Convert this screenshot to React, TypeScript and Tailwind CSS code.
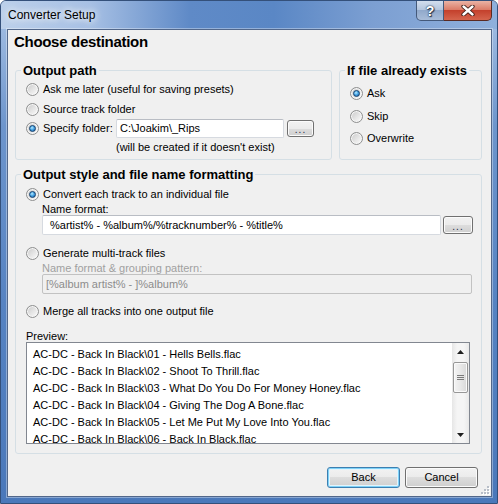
import React from "react";

const Radio = ({ checked = false }: { checked?: boolean }) => (
  <span className="flex h-[13px] w-[13px] shrink-0 items-center justify-center rounded-full border border-[#8e8f8f] bg-[linear-gradient(135deg,#c9c9c9_0%,#e6e6e6_55%,#fdfdfd_100%)] shadow-[inset_0_0_0_1px_#f7f7f7]">
    {checked && (
      <span className="h-[7px] w-[7px] rounded-full border border-[#12406f] bg-[radial-gradient(circle_at_40%_35%,#b9ecff_0%,#49a6e6_45%,#175a9e_100%)]" />
    )}
  </span>
);

const RadioRow = ({
  checked,
  label,
  className = "",
}: {
  checked?: boolean;
  label: string;
  className?: string;
}) => (
  <div className={`flex items-center gap-[4px] ${className}`}>
    <Radio checked={checked} />
    <span className="whitespace-nowrap text-[11px] leading-[13px] text-black">{label}</span>
  </div>
);

const DotsButton = ({ className = "" }: { className?: string }) => (
  <div
    className={`flex shrink-0 items-center justify-center rounded-[3px] border border-[#707070] bg-[linear-gradient(180deg,#f2f2f2_0%,#ebebeb_50%,#dddddd_50%,#cfcfcf_100%)] shadow-[inset_0_0_0_1px_#fbfbfb] ${className}`}
  >
    <span className="pt-[3px] text-[10px] leading-[10px] tracking-[1px] text-[#1c2a44]">...</span>
  </div>
);

const PushButton = ({ label, isDefault = false }: { label: string; isDefault?: boolean }) => (
  <div
    className={`flex h-[21px] w-[73px] items-center justify-center rounded-[3px] border bg-[linear-gradient(180deg,#f2f2f2_0%,#ebebeb_50%,#dddddd_50%,#cfcfcf_100%)] ${
      isDefault
        ? "border-[#3c7fb1] shadow-[inset_0_0_0_1px_#7fd2f8,inset_0_0_0_2px_#e3f4fc]"
        : "border-[#707070] shadow-[inset_0_0_0_1px_#fbfbfb]"
    }`}
  >
    <span className="text-[11px] leading-[13px] text-black">{label}</span>
  </div>
);

const files = [
  "AC-DC - Back In Black\\01 - Hells Bells.flac",
  "AC-DC - Back In Black\\02 - Shoot To Thrill.flac",
  "AC-DC - Back In Black\\03 - What Do You Do For Money Honey.flac",
  "AC-DC - Back In Black\\04 - Giving The Dog A Bone.flac",
  "AC-DC - Back In Black\\05 - Let Me Put My Love Into You.flac",
  "AC-DC - Back In Black\\06 - Back In Black.flac",
];

export default function App() {
  return (
    <div className="flex h-[504px] w-[498px] flex-col overflow-hidden rounded-t-[6px] border border-[#34507a] bg-[linear-gradient(180deg,#a9c3e6_0%,#6d95cc_25%,#5683c2_60%,#4a78ba_100%)] font-['Liberation_Sans',Arial,sans-serif]">
      {/* Title bar */}
      <div className="flex h-[28px] shrink-0 items-start bg-[linear-gradient(90deg,#bcd0ea_0%,#a7c0e4_18%,#5f8ac7_38%,#5a87c5_55%,#7c9fd2_75%,#8fb0dc_100%)]">
        <span className="ml-[7px] mt-[7px] text-[12px] leading-[15px] text-black [text-shadow:0_0_6px_#ffffff,0_0_10px_#ffffff]">
          Converter Setup
        </span>
        <div className="ml-auto mr-[5px] flex">
          <div className="flex h-[20px] w-[28px] items-center justify-center rounded-bl-[5px] border border-t-0 border-[#44597a] bg-[linear-gradient(180deg,#d3deee_0%,#b5c6de_45%,#91a9cb_50%,#a9bdd9_100%)]">
            <span className="text-[14px] font-bold leading-[14px] text-white [text-shadow:0_0_1px_#24354f,0_0_2px_#24354f,1px_1px_1px_#24354f]">
              ?
            </span>
          </div>
          <div className="flex h-[20px] w-[48px] items-center justify-center rounded-br-[5px] border border-l-0 border-t-0 border-[#5b2a22] bg-[linear-gradient(180deg,#eab3a5_0%,#dc7d69_45%,#c4412d_50%,#d5654e_100%)]">
            <svg width="14" height="11" viewBox="0 0 14 11">
              <path d="M2.5 1.5 L11.5 9.5 M11.5 1.5 L2.5 9.5" stroke="#3b1a14" strokeWidth="4.2" strokeLinecap="round" />
              <path d="M2.5 1.5 L11.5 9.5 M11.5 1.5 L2.5 9.5" stroke="#ffffff" strokeWidth="2.4" strokeLinecap="round" />
            </svg>
          </div>
        </div>
      </div>

      {/* Client area */}
      <div className="relative ml-[6px] flex h-[468px] w-[485px] flex-col border border-[#52678a] bg-[#f0f0f0] shadow-[0_0_0_1px_rgba(255,255,255,0.35)]">
        <div className="ml-[6px] mt-[3px] h-[18px] text-[15px] font-bold leading-[18px] tracking-[-0.3px] text-black">
          Choose destination
        </div>

        {/* Top row */}
        <div className="ml-[7px] mt-[12px] flex gap-[7px]">
          <fieldset className="h-[97px] w-[317px] rounded-[3px] border border-[#d5dfe5]">
            <legend className="ml-[5px] px-[2px] text-[13px] font-bold leading-[15px] text-black">Output path</legend>
            <div className="flex flex-col pl-[10px]">
              <RadioRow label="Ask me later (useful for saving presets)" className="mt-[1px] h-[20px]" />
              <RadioRow label="Source track folder" className="h-[20px]" />
              <div className="flex h-[19px] items-center">
                <div className="w-[90px]">
                  <RadioRow checked label="Specify folder:" />
                </div>
                <div className="flex h-[19px] w-[168px] items-center rounded-[2px] border border-[#d6dae0] border-t-[#b9bdc4] bg-white pl-[3px]">
                  <span className="text-[11px] leading-[13px] text-black">C:\Joakim\_Rips</span>
                </div>
                <DotsButton className="ml-[3px] h-[17px] w-[27px]" />
              </div>
              <div className="ml-[90px] flex h-[18px] items-center">
                <span className="text-[11px] leading-[13px] text-black">(will be created if it doesn't exist)</span>
              </div>
            </div>
          </fieldset>

          <fieldset className="h-[97px] w-[143px] rounded-[3px] border border-[#d5dfe5]">
            <legend className="ml-[5px] px-[2px] text-[13px] font-bold leading-[15px] text-black">If file already exists</legend>
            <div className="mt-[4px] flex flex-col pl-[10px]">
              <RadioRow checked label="Ask" className="h-[23px]" />
              <RadioRow label="Skip" className="h-[22px]" />
              <RadioRow label="Overwrite" className="h-[22px]" />
            </div>
          </fieldset>
        </div>

        {/* Output style group */}
        <fieldset className="ml-[7px] mt-[7px] h-[287px] w-[467px] rounded-[3px] border border-[#d5dfe5]">
          <legend className="ml-[5px] px-[2px] text-[13px] font-bold leading-[15px] text-black">
            Output style and file name formatting
          </legend>
          <div className="flex flex-col pl-[10px]">
            <RadioRow checked label="Convert each track to an individual file" className="mt-[2px] h-[20px]" />
            <div className="ml-[16px] flex h-[11px] items-center">
              <span className="text-[11px] leading-[13px] text-black">Name format:</span>
            </div>
            <div className="ml-[16px] flex h-[20px] items-center">
              <div className="flex h-[20px] w-[399px] items-center rounded-[2px] border border-[#d6dae0] border-t-[#b9bdc4] bg-white pl-[7px]">
                <span className="whitespace-nowrap text-[11px] leading-[13px] text-black">
                  %artist% - %album%/%tracknumber% - %title%
                </span>
              </div>
              <DotsButton className="ml-[2px] h-[18px] w-[30px]" />
            </div>
            <RadioRow label="Generate multi-track files" className="mt-[8px] h-[20px]" />
            <div className="ml-[16px] flex h-[11px] items-center">
              <span className="text-[11px] leading-[13px] text-[#a0a0a0]">Name format &amp; grouping pattern:</span>
            </div>
            <div className="ml-[16px] flex h-[20px] w-[430px] items-center rounded-[2px] border border-[#c2c2c2] bg-[#f0f0f0] pl-[3px]">
              <span className="text-[11px] leading-[13px] text-[#8c8c8c]">[%album artist% - ]%album%</span>
            </div>
            <RadioRow label="Merge all tracks into one output file" className="mt-[7px] h-[20px]" />
            <div className="mt-[9px] flex h-[12px] items-center">
              <span className="text-[11px] leading-[13px] text-black">Preview:</span>
            </div>
            <div className="flex h-[102px] w-[444px] border border-[#828790] bg-white">
              <div className="flex-1 overflow-hidden pl-[6px] pt-[3px]">
                {files.map((f) => (
                  <div key={f} className="h-[17px] whitespace-nowrap text-[11px] leading-[17px] text-black">
                    {f}
                  </div>
                ))}
              </div>
              {/* Scrollbar */}
              <div className="flex w-[17px] flex-col items-center bg-[linear-gradient(90deg,#e6e6e6_0%,#f5f5f5_30%,#f5f5f5_70%,#e9e9e9_100%)]">
                <div className="flex h-[17px] w-full items-center justify-center">
                  <svg width="7" height="4" viewBox="0 0 7 4">
                    <path d="M3.5 0 L7 4 L0 4 Z" fill="#1e1e1e" />
                  </svg>
                </div>
                <div className="mt-[2px] flex h-[31px] w-[15px] items-center justify-center rounded-[2px] border border-[#979797] bg-[linear-gradient(90deg,#f4f4f4_0%,#e8e8e8_50%,#d9d9d9_100%)] shadow-[inset_0_0_0_1px_#fafafa]">
                  <div className="flex flex-col gap-[1px]">
                    <div className="h-px w-[7px] bg-[#7a7a7a]" />
                    <div className="h-px w-[7px] bg-[#7a7a7a]" />
                    <div className="h-px w-[7px] bg-[#7a7a7a]" />
                  </div>
                </div>
                <div className="mt-auto flex h-[17px] w-full items-center justify-center">
                  <svg width="7" height="4" viewBox="0 0 7 4">
                    <path d="M0 0 L7 0 L3.5 4 Z" fill="#1e1e1e" />
                  </svg>
                </div>
              </div>
            </div>
          </div>
        </fieldset>

        {/* Buttons */}
        <div className="mr-[13px] mt-[13px] flex justify-end gap-[5px]">
          <PushButton label="Back" isDefault />
          <PushButton label="Cancel" />
        </div>

        {/* Resize grip */}
        <svg className="absolute bottom-[1px] right-[1px]" width="11" height="11" viewBox="0 0 11 11">
          {[
            [8, 2],
            [5, 5],
            [8, 5],
            [2, 8],
            [5, 8],
            [8, 8],
          ].map(([x, y]) => (
            <g key={`${x}-${y}`}>
              <rect x={x + 1} y={y + 1} width="2" height="2" fill="#ffffff" />
              <rect x={x} y={y} width="2" height="2" fill="#b8bec8" />
            </g>
          ))}
        </svg>
      </div>
    </div>
  );
}
